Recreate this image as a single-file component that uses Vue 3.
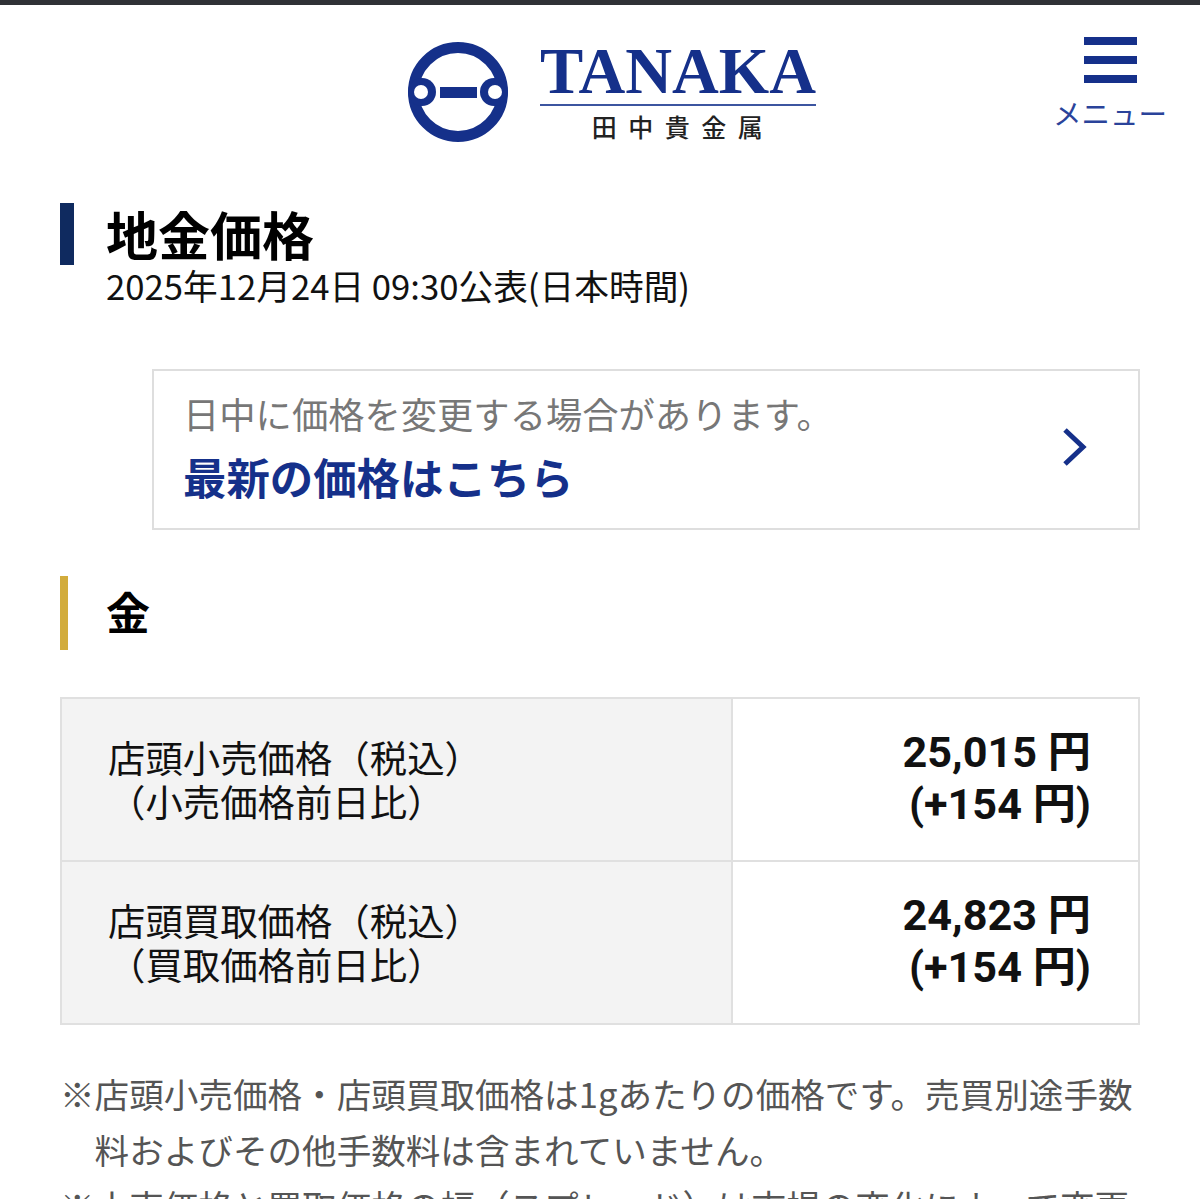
<script setup>
const rows = [
  { label: '店頭小売価格（税込）', sub: '（小売価格前日比）', price: '25,015 円', diff: '(+154 円)' },
  { label: '店頭買取価格（税込）', sub: '（買取価格前日比）', price: '24,823 円', diff: '(+154 円)' },
]
const notes = [
  '店頭小売価格・店頭買取価格は1gあたりの価格です。売買別途手数料およびその他手数料は含まれていません。',
  '小売価格と買取価格の幅（スプレッド）は市場の変化によって変更される場合があります。',
]
</script>

<template>
  <div class="page">
    <div class="topbar"></div>
    <header class="header">
      <div class="logo">
        <svg class="mark" width="100" height="100" viewBox="0 0 100 100">
          <circle cx="50" cy="50" r="44.5" fill="none" stroke="#15308a" stroke-width="11" />
          <circle cx="14" cy="50" r="14" fill="#15308a" />
          <circle cx="86" cy="50" r="14" fill="#15308a" />
          <circle cx="13" cy="50" r="7" fill="#fff" />
          <circle cx="87" cy="50" r="7" fill="#fff" />
          <rect x="32" y="45" width="37" height="11" fill="#15308a" />
        </svg>
        <div class="wordmark">
          <div class="tanaka">TANAKA</div>
          <div class="company">田中貴金属</div>
        </div>
      </div>
      <div class="menu">
        <div class="bars"><i></i><i></i><i></i></div>
        <div class="menu-label">メニュー</div>
      </div>
    </header>

    <main class="main">
      <div class="title-block">
        <h1>地金価格</h1>
        <p>2025年12月24日 09:30公表(日本時間)</p>
      </div>

      <a class="latest">
        <div class="latest-text">
          <div class="latest-note">日中に価格を変更する場合があります。</div>
          <div class="latest-link">最新の価格はこちら</div>
        </div>
        <svg class="chevron" width="24" height="38" viewBox="0 0 24 38">
          <path d="M2 2 L20 19 L2 36" fill="none" stroke="#15308a" stroke-width="5" />
        </svg>
      </a>

      <h2 class="gold">金</h2>

      <div class="table">
        <div v-for="r in rows" :key="r.label" class="row">
          <div class="label">{{ r.label }}<br />{{ r.sub }}</div>
          <div class="value">{{ r.price }}<br />{{ r.diff }}</div>
        </div>
      </div>

      <ul class="notes">
        <li v-for="n in notes" :key="n">{{ n }}</li>
      </ul>
    </main>
  </div>
</template>

<style>
html, body { margin: 0; overflow: hidden; background: #fff; }
</style>

<style scoped>
.page {
  height: 1199px;
  overflow: hidden;
  background: #fff;
  color: #000;
  font-family: Roboto, "Noto Sans CJK JP", sans-serif;
}
.topbar { height: 5px; background: #2f3136; }
.header { position: relative; height: 153px; }
.logo {
  display: flex;
  gap: 32px;
  padding: 37px 0 0 408px;
}
.mark { display: block; }
.wordmark { width: 276px; }
.tanaka {
  font-family: "Liberation Serif", serif;
  font-weight: 700;
  font-size: 64.8px;
  line-height: 58px;
  color: #15308a;
  height: 62px;
  border-bottom: 2px solid #3c55a0;
  white-space: nowrap;
}
.company {
  font-size: 25px;
  font-weight: 500;
  line-height: 40px;
  letter-spacing: 11.5px;
  text-align: center;
  color: #222;
  font-family: "Noto Sans CJK JP", sans-serif;
  padding-left: 10px;
}
.menu {
  position: absolute;
  top: 32px;
  right: 32px;
  width: 116px;
  text-align: center;
}
.bars { width: 53px; margin: 0 auto; display: flex; flex-direction: column; gap: 11px; }
.bars i { display: block; height: 8px; background: #15308a; }
.menu-label {
  font-size: 28.5px;
  font-weight: 400;
  line-height: 36px;
  margin-top: 12px;
  color: #2a439a;
  white-space: nowrap;
  font-family: "Noto Sans CJK JP", sans-serif;
}
.main { padding: 45px 60px 0; }
.title-block { position: relative; padding-left: 46px; }
.title-block::before {
  content: "";
  position: absolute;
  left: 0;
  top: 0;
  width: 14px;
  height: 62px;
  background: #0f2a5f;
}
h1 {
  margin: 0;
  font-size: 52px;
  line-height: 62px;
  font-weight: 700;
  font-family: "Noto Sans CJK JP", sans-serif;
}
.title-block p {
  margin: 0;
  font-size: 34.7px;
  line-height: 40px;
  font-family: "Noto Sans CJK JP", sans-serif;
  color: #111;
  white-space: nowrap;
}
.latest {
  display: flex;
  align-items: center;
  justify-content: space-between;
  box-sizing: border-box;
  height: 161px;
  margin: 64px 0 0 92px;
  border: 2px solid #dedede;
  padding: 0 51px 0 29px;
}
.latest-text { padding-bottom: 4px; }
.chevron { margin-bottom: 6px; }
.latest-note {
  font-size: 36.3px;
  line-height: 50px;
  color: #777;
  font-family: "Noto Sans CJK JP", sans-serif;
}
.latest-link {
  font-size: 43.4px;
  line-height: 64px;
  font-weight: 700;
  color: #15308a;
  margin-top: 6px;
  font-family: "Noto Sans CJK JP", sans-serif;
}
.gold {
  margin: 46px 0 0;
  height: 74px;
  box-sizing: border-box;
  border-left: 8px solid #d2ac3c;
  padding-left: 38px;
  font-size: 44px;
  line-height: 71px;
  font-weight: 700;
  font-family: "Noto Sans CJK JP", sans-serif;
}
.table {
  margin-top: 47px;
  border: 2px solid #e0e0e0;
}
.row { display: flex; height: 161px; }
.row + .row { border-top: 2px solid #e0e0e0; }
.label {
  box-sizing: border-box;
  width: 671px;
  background: #f3f3f3;
  border-right: 2px solid #e0e0e0;
  padding: 36px 0 0 46px;
  font-size: 37.4px;
  line-height: 44px;
  color: #111;
  font-family: "Noto Sans CJK JP", sans-serif;
}
.value {
  flex: 1;
  padding: 28px 47px 0 0;
  text-align: right;
  font-size: 43.2px;
  line-height: 52px;
  font-weight: 700;
  color: #111;
}
.notes {
  list-style: none;
  margin: 40px 0 0;
  padding: 0;
  font-size: 34.6px;
  line-height: 56px;
  color: #555;
  font-family: "Noto Sans CJK JP", sans-serif;
}
.notes li { position: relative; padding-left: 34.6px; }
.notes li::before { content: "※"; position: absolute; left: 0; top: 0; }
</style>
